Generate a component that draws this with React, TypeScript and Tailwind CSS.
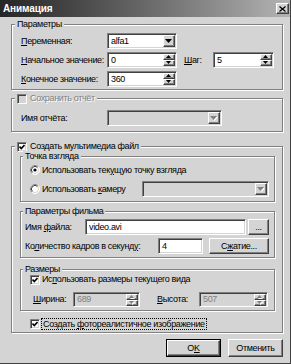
import React from 'react';

const sunken =
  'border border-t-[#808080] border-l-[#808080] border-r-white border-b-white shadow-[inset_1px_1px_0_#404040,inset_-1px_-1px_0_#d4d4d4]';
const raised =
  'bg-[#d4d4d4] border border-t-white border-l-white border-r-[#404040] border-b-[#404040] shadow-[inset_-1px_-1px_0_#808080]';
const dim = 'text-[#808080] [text-shadow:1px_1px_0_#fff]';

function U({ children }: { children: React.ReactNode }) {
  return <span className="underline underline-offset-1">{children}</span>;
}

function Tri({ up, small, disabled }: { up?: boolean; small?: boolean; disabled?: boolean }) {
  const w = small ? 5 : 7;
  const h = small ? 3 : 4;
  const d = up ? `M0 ${h}H${w}L${w / 2} 0Z` : `M0 0H${w}L${w / 2} ${h}Z`;
  return (
    <svg width={w + 1} height={h + 1} viewBox={`0 0 ${w + 1} ${h + 1}`}>
      {disabled && <path d={d} fill="#fff" transform="translate(1 1)" />}
      <path d={d} fill={disabled ? '#808080' : '#000'} />
    </svg>
  );
}

function Combo({ value, className, disabled }: { value?: string; className: string; disabled?: boolean }) {
  return (
    <div className={`flex h-full p-[1px] ${sunken} ${disabled ? 'bg-[#d4d4d4]' : 'bg-white'} ${className}`}>
      <span className="flex-1 pl-[2px] flex items-center">{value}</span>
      <div className={`w-[12px] flex items-center justify-center ${raised}`}>
        <Tri disabled={disabled} />
      </div>
    </div>
  );
}

function Spin({ value, className, disabled }: { value: string; className: string; disabled?: boolean }) {
  return (
    <div className={`flex h-full p-[1px] ${sunken} ${disabled ? 'bg-[#d4d4d4]' : 'bg-white'} ${className}`}>
      <span className={`flex-1 pl-[2px] flex items-center ${disabled ? 'text-[#808080]' : ''}`}>{value}</span>
      <div className="w-[12px] flex flex-col">
        <div className={`flex-1 flex items-center justify-center ${raised}`}>
          <Tri up small disabled={disabled} />
        </div>
        <div className={`flex-1 flex items-center justify-center ${raised}`}>
          <Tri small disabled={disabled} />
        </div>
      </div>
    </div>
  );
}

function Field({ value, className }: { value: string; className: string }) {
  return (
    <div className={`h-full p-[1px] pl-[3px] flex items-center bg-white ${sunken} ${className}`}>{value}</div>
  );
}

function Check({ checked, disabled }: { checked?: boolean; disabled?: boolean }) {
  return (
    <span
      className={`w-[10px] h-[10px] shrink-0 flex items-center justify-center ${sunken} ${
        disabled ? 'bg-[#d4d4d4]' : 'bg-white'
      }`}
    >
      {checked && (
        <svg width="6" height="6" viewBox="0 0 6 6">
          <polyline points="0.5,2.5 2.3,4.5 5.5,1" fill="none" stroke="#000" strokeWidth="1.6" />
        </svg>
      )}
    </span>
  );
}

function Radio({ checked }: { checked?: boolean }) {
  return (
    <svg width="10" height="10" viewBox="0 0 10 10" className="shrink-0">
      <circle cx="5" cy="5" r="4.5" fill="#fff" stroke="#fff" />
      <path d="M1.8 8.2A4.5 4.5 0 0 1 8.2 1.8" fill="none" stroke="#808080" />
      <path d="M2.5 7.5A3.5 3.5 0 0 1 7.5 2.5" fill="none" stroke="#404040" />
      <path d="M7.5 2.5A3.5 3.5 0 0 1 2.5 7.5" fill="none" stroke="#d4d4d4" />
      {checked && <circle cx="5" cy="5" r="1.6" fill="#000" />}
    </svg>
  );
}

function Btn({ children, className, def }: { children: React.ReactNode; className: string; def?: boolean }) {
  if (def)
    return (
      <div className={`border border-black ${className}`}>
        <div className={`h-full flex items-center justify-center ${raised}`}>{children}</div>
      </div>
    );
  return <div className={`flex items-center justify-center ${raised} ${className}`}>{children}</div>;
}

function Group({
  legend,
  className,
  left = 'left-[3px]',
  children,
}: {
  legend: React.ReactNode;
  className: string;
  left?: string;
  children: React.ReactNode;
}) {
  return (
    <div className={`relative border border-[#808080] shadow-[1px_1px_0_#fff,inset_1px_1px_0_#fff] ${className}`}>
      <div className={`absolute -top-[6px] ${left} h-[11px] px-[2px] bg-[#d4d4d4] flex items-center gap-[3px]`}>
        {legend}
      </div>
      {children}
    </div>
  );
}

export default function App() {
  return (
    <div className="w-[291px] h-[364px] bg-[#d4d4d4] border-r border-b border-[#404040] flex flex-col text-black text-[9px] leading-[11px] tracking-[-0.35px] font-['Liberation_Sans',Arial,sans-serif] whitespace-nowrap overflow-hidden">
      {/* title bar */}
      <div className="h-[17px] shrink-0 flex items-center justify-between pl-[3px] pr-[1px] bg-linear-to-r from-[#262626] to-[#b4b4b4]">
        <span className="text-white font-bold text-[10px] tracking-[-0.1px]">Анимация</span>
        <div className={`w-[13px] h-[11px] flex items-center justify-center ${raised}`}>
          <svg width="7" height="6" viewBox="0 0 7 6">
            <path d="M0.5 0.5L6.5 5.5M6.5 0.5L0.5 5.5" stroke="#000" strokeWidth="1.3" />
          </svg>
        </div>
      </div>

      <div className="pl-[11px] flex flex-col">
        <Group legend="Параметры" className="w-[272px] mt-[7px] h-[66px] pt-[8px] pl-[9px] flex flex-col gap-[3px]">
          <div className="flex items-center h-[16px]">
            <span className="w-[86px]">
              <U>П</U>еременная:
            </span>
            <Combo value="alfa1" className="w-[70px]" />
          </div>
          <div className="flex items-center h-[16px]">
            <span className="w-[86px]">
              <U>Н</U>ачальное значение:
            </span>
            <Spin value="0" className="w-[70px]" />
            <span className="ml-[7px] w-[29px]">
              <U>Ш</U>аг:
            </span>
            <Spin value="5" className="w-[61px]" />
          </div>
          <div className="flex items-center h-[16px]">
            <span className="w-[86px]">
              <U>К</U>онечное значение:
            </span>
            <Spin value="360" className="w-[70px]" />
          </div>
        </Group>

        <Group
          legend={
            <>
              <Check disabled />
              <span className={dim}>Сохранить отчёт</span>
            </>
          }
          className="w-[272px] mt-[8px] h-[34px] pt-[11px] pl-[9px]"
        >
          <div className="flex items-center h-[16px]">
            <span className="w-[86px]">Имя отчёта:</span>
            <Combo disabled className="w-[115px]" />
          </div>
        </Group>

        <Group
          legend={
            <>
              <Check checked />
              <span>Создать мультимедиа файл</span>
            </>
          }
          className="w-[272px] mt-[14px] h-[187px] pt-[9px] pl-[8px] flex flex-col"
        >
          <Group legend="Точка взгляда" left="left-[2px]" className="w-[255px] h-[46px] pt-[7px] pl-[9px]">
            <div className="flex items-center h-[12px] gap-[2px]">
              <Radio checked />
              <span>
                Использовать тек<U>у</U>щую точку взгляда
              </span>
            </div>
            <div className="flex items-center h-[16px] mt-[5px]">
              <div className="w-[112px] flex items-center gap-[2px]">
                <Radio />
                <span>
                  Использовать <U>к</U>амеру
                </span>
              </div>
              <Combo disabled className="w-[127px]" />
            </div>
          </Group>

          <Group legend="Параметры фильма" left="left-[2px]" className="w-[255px] mt-[9px] h-[47px] pt-[7px] pl-[4px]">
            <div className="flex items-center h-[16px]">
              <span className="w-[60px]">
                Имя <U>ф</U>айла:
              </span>
              <Field value="video.avi" className="w-[161px]" />
              <Btn className="ml-[2px] w-[21px] h-[16px]">...</Btn>
            </div>
            <div className="flex items-center h-[16px] mt-[3px]">
              <span className="w-[133px]">
                Ко<U>л</U>ичество кадров в секунд<U>у</U>:
              </span>
              <Field value="4" className="w-[45px]" />
              <Btn className="ml-[6px] w-[60px] h-[16px]">
                С<U>ж</U>атие...
              </Btn>
            </div>
          </Group>

          <Group legend="Размеры" left="left-[2px]" className="w-[255px] mt-[11px] h-[42px] pt-[4px] pl-[9px]">
            <div className="flex items-center h-[11px] gap-[2px]">
              <Check checked />
              <span>
                Ис<U>п</U>ользовать размеры текущего вида
              </span>
            </div>
            <div className="flex items-center h-[15px] mt-[7px] pl-[3px]">
              <span className="w-[40px]">
                <U>Ш</U>ирина:
              </span>
              <Spin value="689" disabled className="w-[67px]" />
              <span className="ml-[17px] w-[42px]">
                <U>В</U>ысота:
              </span>
              <Spin value="507" disabled className="w-[69px]" />
            </div>
          </Group>

          <div className="flex items-center h-[13px] mt-[6px] ml-[10px]">
            <Check checked />
            <span className="ml-[1px] px-[1px] border border-dotted border-black leading-[10px]">
              Создать <U>ф</U>отореалистичное изображение
            </span>
          </div>
        </Group>

        <div className="w-[272px] mt-[6px] h-[18px] flex justify-end gap-[7px]">
          <Btn def className="w-[55px] h-[18px]">
            O<U>K</U>
          </Btn>
          <Btn className="w-[55px] h-[18px]">Отменить</Btn>
        </div>
      </div>
    </div>
  );
}
